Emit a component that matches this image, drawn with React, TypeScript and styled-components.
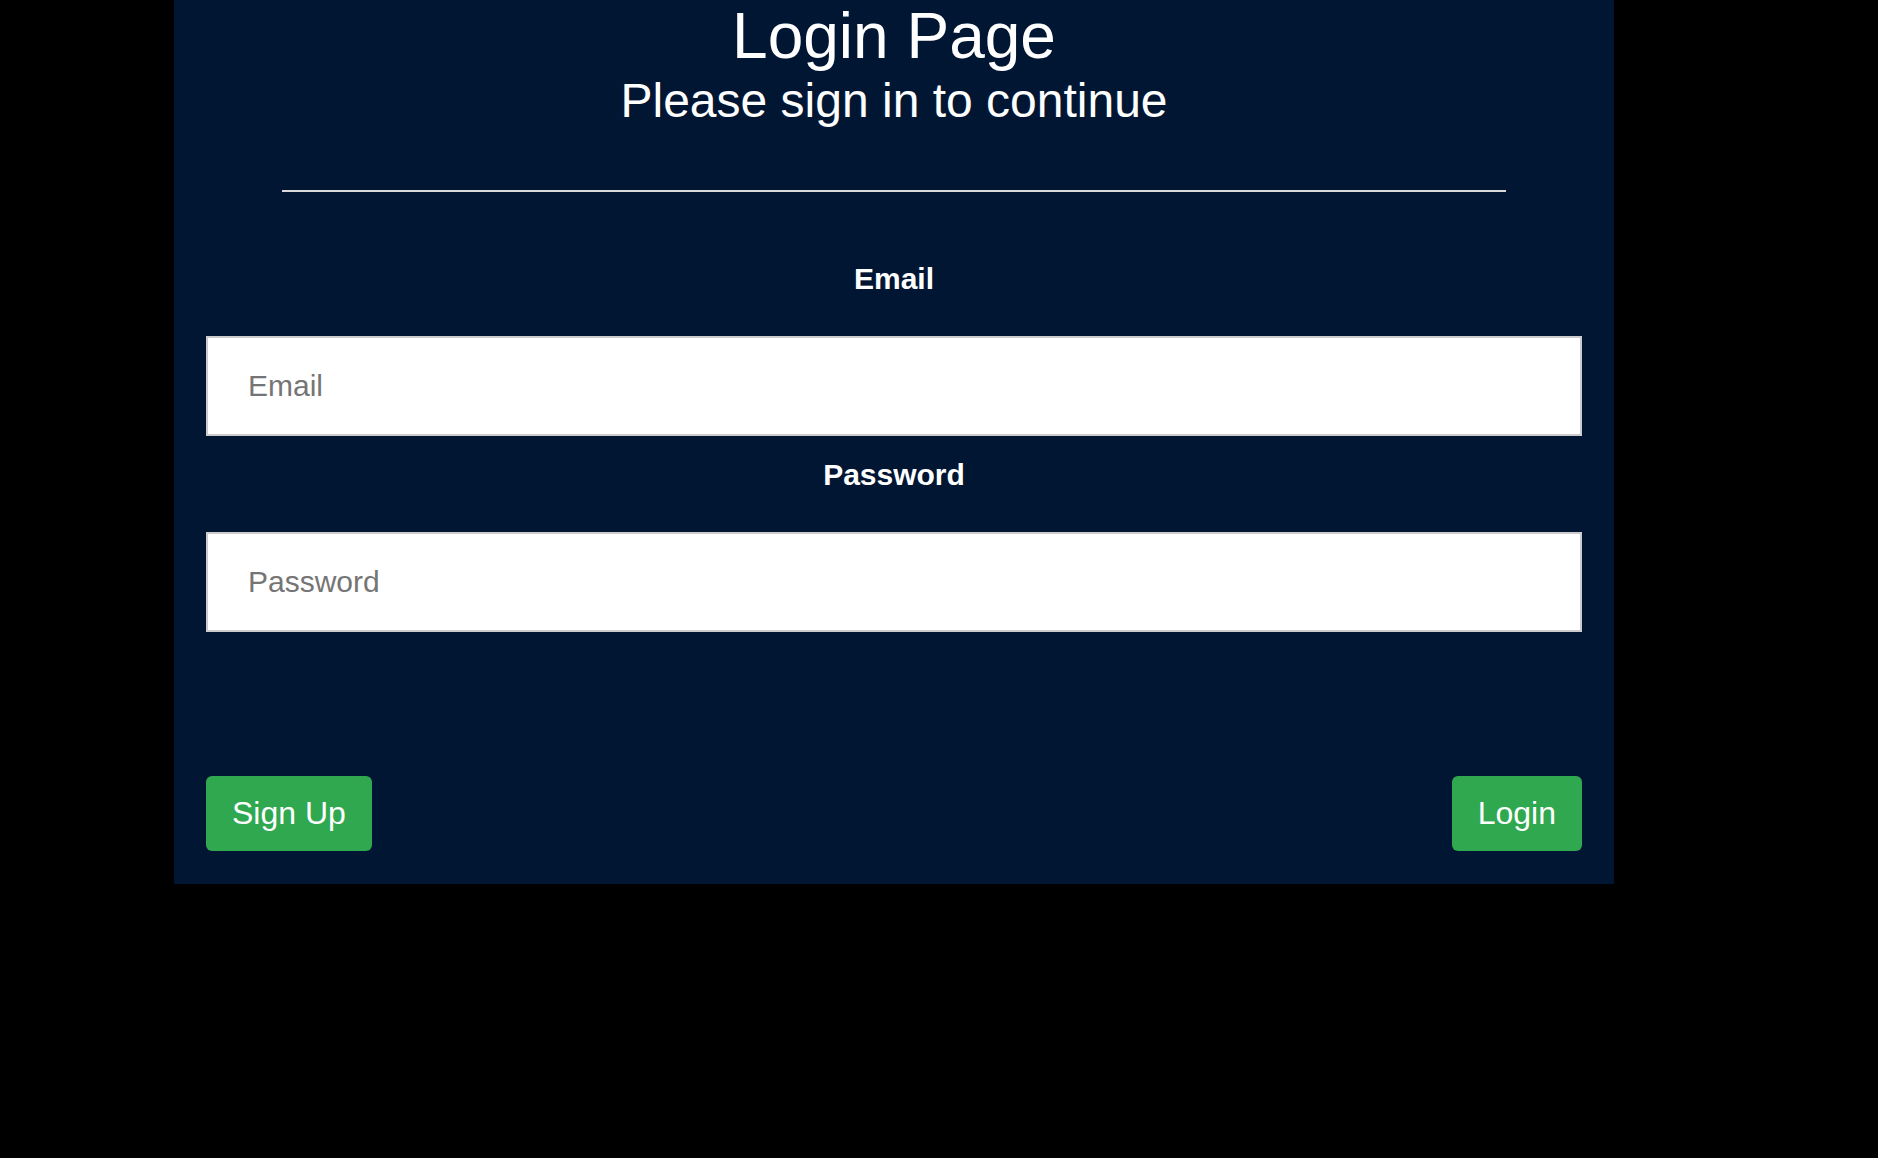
import React from "react";
import styled, { createGlobalStyle } from "styled-components";

const GlobalStyle = createGlobalStyle`
  html, body {
    margin: 0;
    padding: 0;
    background: #000000;
    font-family: "Liberation Sans", Arial, sans-serif;
  }
  * { box-sizing: border-box; }
`;

const Page = styled.div`
  min-height: 100vh;
  background: #000000;
  padding-left: 174px;
`;

const Panel = styled.div`
  width: 1440px;
  background: #011633;
  padding: 0 32px 33px 32px;
  display: flex;
  flex-direction: column;
`;

const Header = styled.header`
  text-align: center;
  color: #ffffff;
`;

const Title = styled.h1`
  margin: 0;
  font-family: "Liberation Sans", Arial, sans-serif;
  font-weight: 400;
  font-size: 64px;
  line-height: 72px;
`;

const Subtitle = styled.h2`
  margin: 0;
  font-family: "Liberation Sans", Arial, sans-serif;
  font-weight: 400;
  font-size: 48px;
  line-height: 58px;
`;

const Divider = styled.hr`
  border: none;
  height: 2px;
  background: #d9d9d9;
  margin: 60px 76px 0 76px;
`;

const Form = styled.form`
  display: flex;
  flex-direction: column;
  margin-top: 69px;
`;

const Label = styled.label<{ $first?: boolean }>`
  display: block;
  text-align: center;
  color: #ffffff;
  font-weight: 700;
  font-size: 30px;
  line-height: 36px;
  margin-top: ${(p) => (p.$first ? "0" : "21px")};
  margin-bottom: 39px;
`;

const Input = styled.input`
  display: block;
  width: 100%;
  height: 100px;
  border: 2px solid #cccccc;
  background: #ffffff;
  padding: 0 40px;
  font-family: "Liberation Sans", Arial, sans-serif;
  font-size: 30px;
  color: #333333;
  outline: none;
  &::placeholder {
    color: #757575;
  }
`;

const Actions = styled.div`
  display: flex;
  justify-content: space-between;
  margin-top: 144px;
`;

const Button = styled.button`
  height: 75px;
  padding: 0 26px;
  border: none;
  border-radius: 6px;
  background: #2fa84f;
  color: #ffffff;
  font-family: "Liberation Sans", Arial, sans-serif;
  font-size: 32px;
  cursor: pointer;
`;

export default function App() {
  return (
    <>
      <GlobalStyle />
      <Page>
        <Panel>
          <Header>
            <Title>Login Page</Title>
            <Subtitle>Please sign in to continue</Subtitle>
          </Header>
          <Divider />
          <Form onSubmit={(e) => e.preventDefault()}>
            <Label $first htmlFor="email">Email</Label>
            <Input id="email" type="email" placeholder="Email" />
            <Label htmlFor="password">Password</Label>
            <Input id="password" type="password" placeholder="Password" />
            <Actions>
              <Button type="button">Sign Up</Button>
              <Button type="submit">Login</Button>
            </Actions>
          </Form>
        </Panel>
      </Page>
    </>
  );
}
